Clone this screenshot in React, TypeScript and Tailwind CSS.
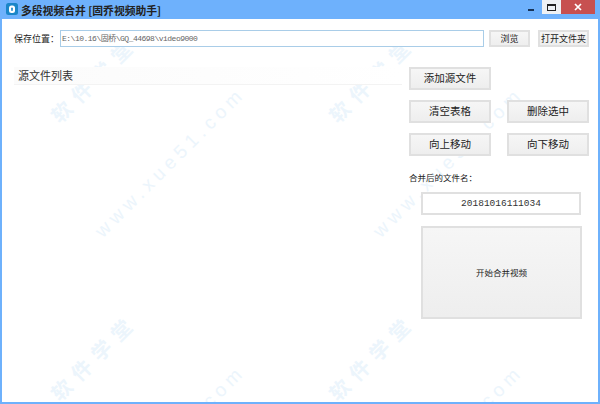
const CJK = "font-['Noto_Sans_CJK_SC','Liberation_Sans',sans-serif]";

function Mark({ x, y, cjk }: { x: number; y: number; cjk?: boolean }) {
  return (
    <span
      className={
        cjk
          ? "absolute -translate-x-1/2 -translate-y-1/2 -rotate-45 whitespace-nowrap text-[20px] leading-none font-bold tracking-[8px] text-[#ecf5fc] font-['Noto_Sans_CJK_SC',sans-serif]"
          : "absolute -translate-x-1/2 -translate-y-1/2 -rotate-45 whitespace-nowrap text-[19px] leading-none tracking-[5px] text-[#ecf5fc] font-['Liberation_Sans',sans-serif]"
      }
      style={{ left: x, top: y }}
    >
      {cjk ? "软件学堂" : "www.xue51.com"}
    </span>
  );
}

function Btn({ label, className }: { label: string; className: string }) {
  return (
    <button
      className={`flex items-center justify-center border-2 border-[#e0e0e0] bg-gradient-to-b from-[#f6f6f6] to-[#eeeeee] text-[#222] leading-none ${className}`}
    >
      {label}
    </button>
  );
}

export default function App() {
  return (
    <div className={`relative flex h-[404px] w-[600px] flex-col overflow-hidden bg-[#6eb1fc] ${CJK}`}>
      <div className="flex h-[19px] shrink-0 items-start">
        <svg className="mt-[3px] ml-[6px]" width="12" height="12" viewBox="0 0 12 12">
          <rect x="0" y="0" width="12" height="12" rx="2.5" fill="#1a86c8" />
          <rect x="3" y="2.5" width="6" height="7.5" rx="2.5" fill="#fff" />
          <rect x="5.2" y="4.5" width="1.6" height="3.5" rx="0.8" fill="#1a86c8" />
        </svg>
        <span className="mt-[2px] ml-[3px] text-[10.8px] leading-[16px] font-bold whitespace-nowrap text-[#222]">
          多段视频合并 [固乔视频助手]
        </span>
        <div className="ml-auto flex items-start">
          <div className="mt-[9px] mr-[8px] h-[2px] w-[6px] bg-[#17345a]" />
          <div className="flex h-[14px] w-[19px] items-center justify-center bg-[#eef1f4]">
            <div className="h-[7px] w-[9px] border border-t-2 border-[#222]" />
          </div>
          <div className="mr-[5px] flex h-[14px] w-[34px] items-center justify-center bg-[#c75050]">
            <svg width="8" height="8" viewBox="0 0 8 8">
              <path d="M1 1l6 6M7 1l-6 6" stroke="#fff" strokeWidth="1.7" />
            </svg>
          </div>
        </div>
      </div>

      <div className="relative mx-[2px] mb-[2px] flex flex-1 flex-col overflow-hidden bg-white">
        <div className="pointer-events-none absolute inset-0">
          <Mark cjk x={92} y={60} />
          <Mark x={168} y={143} />
          <Mark cjk x={370} y={60} />
          <Mark x={446} y={143} />
          <Mark cjk x={92} y={338} />
          <Mark x={168} y={421} />
          <Mark cjk x={370} y={338} />
          <Mark x={446} y={421} />
        </div>

        <div className="relative flex items-center pt-[11px] pr-[9px] pl-[12px]">
          <span className="w-[46px] text-[9px] leading-none whitespace-nowrap text-[#222]">保存位置：</span>
          <div className="flex h-[17px] w-[424px] items-center border border-[#a9cde8] bg-white pl-[1px] font-['Liberation_Mono','Noto_Sans_CJK_SC',monospace] text-[8px] tracking-[-0.5px] whitespace-nowrap text-[#666]">
            E:\10.16\固桥\GQ_44698\video9000
          </div>
          <Btn label="浏览" className="ml-[5px] h-[17px] w-[41px] text-[9px]" />
          <Btn label="打开文件夹" className="ml-auto h-[17px] w-[51px] text-[9px] whitespace-nowrap" />
        </div>

        <div className="relative flex flex-1 pt-[20px] pr-[9px] pl-[12px]">
          <div className="h-[18px] w-[388px] border-b border-[#f3f3f3] bg-gradient-to-r from-[#fbfbfb] to-white pt-[1px] pl-[4px] text-[11px] leading-[14px] text-[#333]">
            源文件列表
          </div>
          <div className="ml-auto flex w-[180px] flex-col text-[10.5px]">
            <Btn label="添加源文件" className="h-[23px] w-[82px]" />
            <div className="mt-[10px] flex justify-between">
              <Btn label="清空表格" className="h-[23px] w-[82px]" />
              <Btn label="删除选中" className="h-[23px] w-[82px]" />
            </div>
            <div className="mt-[10px] flex justify-between">
              <Btn label="向上移动" className="h-[23px] w-[82px]" />
              <Btn label="向下移动" className="h-[23px] w-[82px]" />
            </div>
            <div className="mt-[15px] text-[8.5px] leading-[12px] whitespace-nowrap text-[#222]">合并后的文件名：</div>
            <div className="mt-[9px] ml-[12px] flex h-[23px] w-[160px] items-center justify-center border-2 border-[#e0e0e0] bg-white pt-[1px] font-['Liberation_Mono',monospace] text-[9.5px] text-[#333]">
              20181016111034
            </div>
            <Btn label="开始合并视频" className="mt-[11px] ml-[12px] h-[93px] w-[161px] text-[8.5px]" />
          </div>
        </div>
      </div>
    </div>
  );
}
